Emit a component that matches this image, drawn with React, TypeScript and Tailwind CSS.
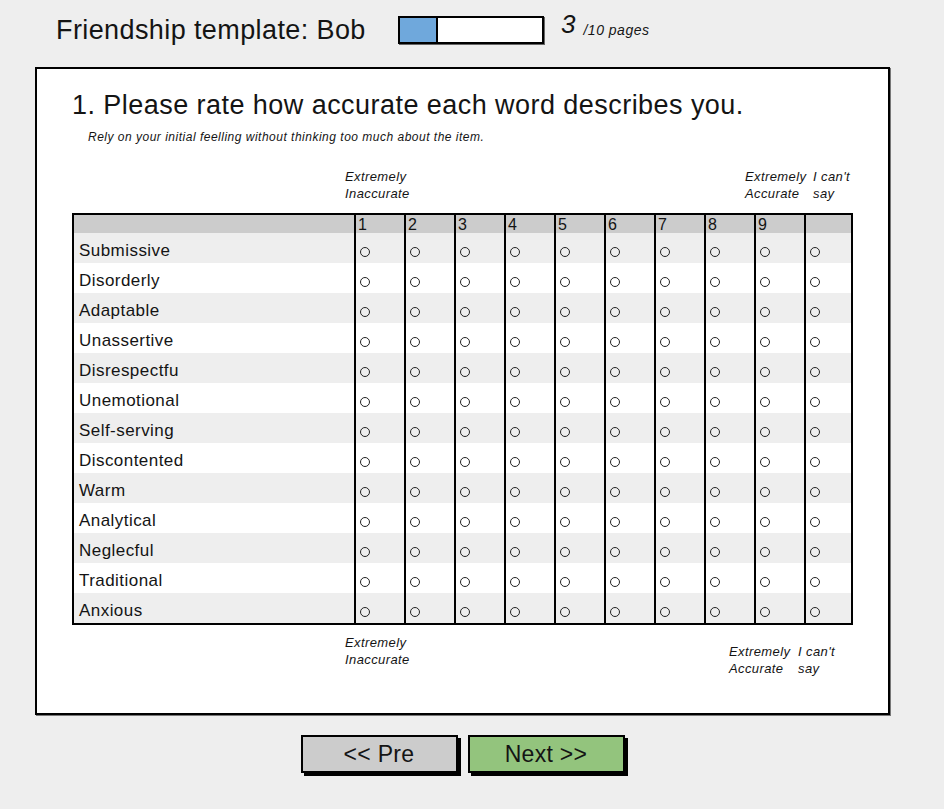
import React from 'react';

const WORDS = [
  'Submissive',
  'Disorderly',
  'Adaptable',
  'Unassertive',
  'Disrespectfu',
  'Unemotional',
  'Self-serving',
  'Discontented',
  'Warm',
  'Analytical',
  'Neglecful',
  'Traditional',
  'Anxious',
];

const SCALE = ['1', '2', '3', '4', '5', '6', '7', '8', '9', ''];

const Radio: React.FC = () => (
  <div className="mt-[1px] w-[10px] h-[10px] rounded-full border border-[#222] bg-transparent" />
);

const ScaleLabels: React.FC<{ bottom?: boolean }> = ({ bottom }) => (
  <div className={`flex items-start text-[13px] leading-[17px] italic tracking-[0.4px] ${bottom ? 'pl-[273px] mt-[9px]' : 'pl-[273px] mt-[24px]'}`}>
    <div className={bottom ? 'w-[384px]' : 'w-[400px]'}>
      Extremely
      <br />
      Inaccurate
    </div>
    <div className={`flex ${bottom ? 'mt-[9px]' : ''}`}>
      <div className={bottom ? 'w-[69px]' : 'w-[68px]'}>
        Extremely
        <br />
        Accurate
      </div>
      <div>
        I can't
        <br />
        say
      </div>
    </div>
  </div>
);

const App: React.FC = () => {
  return (
    <div className="min-h-[809px] w-full bg-[#eeeeee] text-[#141414] font-['Liberation_Sans',Arial,sans-serif]">
      {/* Header */}
      <div className="h-[67px] flex items-start pl-[56px] pt-[14px]">
        <div className="w-[342px] text-[27px] leading-[32px] tracking-[0.4px]">Friendship template: Bob</div>
        <div className="mt-[2px] w-[146px] h-[28px] border-2 border-black bg-white flex shadow-[1px_1px_0_#666]">
          <div className="w-[38px] h-full bg-[#6fa8dc] border-r-2 border-black" />
        </div>
        <div className="ml-[17px] -mt-[6px] text-[26px] leading-[32px] italic">3</div>
        <div className="ml-[8px] mt-[8px] text-[14px] leading-[17px] italic tracking-[0.5px]">/10 pages</div>
      </div>

      {/* Panel */}
      <div className="ml-[35px] w-[855px] h-[648px] border-2 border-black bg-white shadow-[1px_1px_0_#777] pl-[35px] pt-[21px]">
        <div className="text-[27px] leading-[30px] tracking-[0.45px]">
          1. Please rate how accurate each word describes you.
        </div>
        <div className="ml-[16px] mt-[10px] text-[12px] leading-[14px] italic tracking-[0.5px]">
          Rely on your initial feelling without thinking too much about the item.
        </div>

        <ScaleLabels />

        <div className="mt-[11px] w-[781px] border-2 border-black">
          <div className="flex h-[18px] bg-[#cccccc]">
            <div className="w-[280px]" />
            {SCALE.map((s, i) => (
              <div
                key={i}
                className={`${i === 9 ? 'w-[47px]' : 'w-[50px]'} border-l-2 border-black pl-[2px] text-[16px] leading-[19px]`}
              >
                {s}
              </div>
            ))}
          </div>
          {WORDS.map((w, r) => (
            <div key={w} className={`flex h-[30px] ${r % 2 === 0 ? 'bg-[#eeeeee]' : 'bg-white'}`}>
              <div className="w-[280px] pl-[5px] pt-[6px] flex items-center text-[17px] tracking-[0.45px]">{w}</div>
              {SCALE.map((_, i) => (
                <div
                  key={i}
                  className={`${i === 9 ? 'w-[47px]' : 'w-[50px]'} border-l-2 border-black pl-[4px] pt-[6px] flex items-center`}
                >
                  <Radio />
                </div>
              ))}
            </div>
          ))}
        </div>

        <ScaleLabels bottom />
      </div>

      {/* Buttons */}
      <div className="ml-[35px] w-[855px] mt-[20px] flex justify-center gap-[10px]">
        <button className="w-[157px] h-[38px] border-2 border-black bg-[#cccccc] shadow-[3px_3px_0_#000] text-[23px] leading-[34px] tracking-[0.3px]">
          &lt;&lt; Pre
        </button>
        <button className="w-[157px] h-[38px] border-2 border-black bg-[#93c47d] shadow-[3px_3px_0_#000] text-[23px] leading-[34px] tracking-[0.3px]">
          Next &gt;&gt;
        </button>
      </div>
    </div>
  );
};

export default App;
